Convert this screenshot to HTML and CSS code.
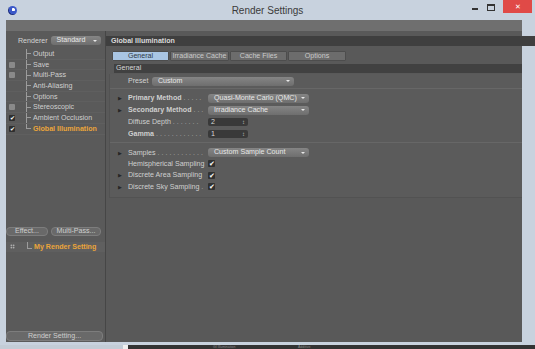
FILE: index.html
```html
<!DOCTYPE html>
<html lang="en">

<head>
    <meta charset="UTF-8">
    <title>Render Settings</title>
    <link rel="stylesheet" href="styles.css">
</head>

<body>
    <div class="window">
        <div class="titlebar">
            <div class="app-icon"></div>
            <div class="title">Render Settings</div>
            <div class="controls">
                <span class="ctl-min"></span>
                <span class="ctl-max"></span>
                <span class="ctl-close">&#x2715;</span>
            </div>
        </div>

        <div class="client">
            <div class="toolbar">
                <div class="grip"></div>
            </div>

            <div class="panes">
                <aside class="left">
                    <div class="renderer-row">
                        <span>Renderer</span>
                        <div class="dropdown small">Standard</div>
                    </div>

                    <div class="tree">
                        <div class="tree-row"><span class="check none"></span><span class="branch"></span>Output</div>
                        <div class="tree-row"><span class="check off"></span><span class="branch"></span>Save</div>
                        <div class="tree-row"><span class="check off"></span><span class="branch"></span>Multi-Pass</div>
                        <div class="tree-row"><span class="check none"></span><span class="branch"></span>Anti-Aliasing</div>
                        <div class="tree-row"><span class="check none"></span><span class="branch"></span>Options</div>
                        <div class="tree-row"><span class="check off"></span><span class="branch"></span>Stereoscopic</div>
                        <div class="tree-row"><span class="check on">&#x2714;</span><span class="branch"></span>Ambient Occlusion</div>
                        <div class="tree-row active"><span class="check on">&#x2714;</span><span class="branch last"></span>Global Illumination</div>
                    </div>

                    <div class="left-buttons">
                        <button class="btn effect">Effect...</button>
                        <button class="btn multipass">Multi-Pass...</button>
                    </div>

                    <div class="setting-row">
                        <span class="dots-icon"></span>
                        <span class="elbow"></span>
                        My Render Setting
                    </div>

                    <button class="btn wide">Render Setting...</button>
                </aside>

                <section class="right">
                    <div class="panel-head">Global Illumination</div>

                    <div class="tabs">
                        <div class="tab active">General</div>
                        <div class="tab t2">Irradiance Cache</div>
                        <div class="tab t3">Cache Files</div>
                        <div class="tab t4">Options</div>
                    </div>

                    <div class="section-bar">General</div>

                    <div class="group">
                        <div class="preset-row">
                            <span class="preset-label">Preset</span>
                            <div class="dropdown preset">Custom</div>
                        </div>

                        <div class="block">
                            <div class="prow">
                                <span class="arrow">&#x25B6;</span>
                                <span class="label bold">Primary Method <i>. . . . .</i></span>
                                <div class="dropdown method">Quasi-Monte Carlo (QMC)</div>
                            </div>
                            <div class="prow">
                                <span class="arrow">&#x25B6;</span>
                                <span class="label bold">Secondary Method <i>. . .</i></span>
                                <div class="dropdown method">Irradiance Cache</div>
                            </div>
                            <div class="prow">
                                <span class="arrow"></span>
                                <span class="label">Diffuse Depth <i>. . . . . . .</i></span>
                                <div class="field">2</div>
                            </div>
                            <div class="prow">
                                <span class="arrow"></span>
                                <span class="label bold">Gamma <i>. . . . . . . . . . . .</i></span>
                                <div class="field">1</div>
                            </div>
                        </div>

                        <div class="block samples">
                            <div class="srow">
                                <span class="arrow">&#x25B6;</span>
                                <span class="label">Samples <i>. . . . . . . . . . . .</i></span>
                                <div class="dropdown method">Custom Sample Count</div>
                            </div>
                            <div class="srow">
                                <span class="arrow"></span>
                                <span class="label">Hemispherical Sampling</span>
                                <span class="tick">&#x2714;</span>
                            </div>
                            <div class="srow">
                                <span class="arrow">&#x25B6;</span>
                                <span class="label">Discrete Area Sampling</span>
                                <span class="tick">&#x2714;</span>
                            </div>
                            <div class="srow">
                                <span class="arrow">&#x25B6;</span>
                                <span class="label">Discrete Sky Sampling <i>.</i></span>
                                <span class="tick">&#x2714;</span>
                            </div>
                        </div>
                    </div>
                </section>
            </div>
        </div>
    </div>

    <div class="behind">
        <span class="behind-light"></span>
        <span class="behind-box"></span>
        <span class="behind-text one">GI Illumination</span>
        <span class="behind-text two">Additive</span>
    </div>
</body>

</html>
```

FILE: styles.css
```css
body {
    margin: 0;
    width: 535px;
    height: 349px;
    overflow: hidden;
    background: #343434;
    font-family: "Liberation Sans", Arial, sans-serif;
    font-size: 7.1px;
    color: #cdcdcd;
}

.window {
    width: 535px;
    height: 345px;
    background: #c8d2de;
    display: flex;
    flex-direction: column;
}

/* title bar */

.titlebar {
    height: 20px;
    flex-shrink: 0;
    display: flex;
    align-items: center;
}

.app-icon {
    width: 9px;
    height: 9px;
    margin-left: 8px;
    border-radius: 50%;
    background: radial-gradient(circle at 60% 40%, #ffffff 0 18%, #3b58c8 22% 60%, #1d2f80 64%);
}

.title {
    flex: 1;
    text-align: center;
    font-size: 10px;
    color: #3b3b3b;
    padding-left: 46px;
}

.controls {
    align-self: flex-start;
    display: flex;
    align-items: flex-start;
}

.ctl-min {
    width: 6px;
    height: 2px;
    background: #333;
    margin: 8px 9px 0 0;
}

.ctl-max {
    width: 6px;
    height: 4px;
    border: 1px solid #333;
    border-top-width: 2px;
    margin: 4px 8px 0 0;
}

.ctl-close {
    width: 29px;
    height: 13px;
    margin-right: 3px;
    background: #e04a47;
    color: #fff;
    font-size: 7px;
    text-align: center;
    line-height: 13px;
}

/* client area */

.client {
    flex: 1;
    margin: 0 13px 3px 6px;
    background: #565656;
    display: flex;
    flex-direction: column;
}

.toolbar {
    height: 11px;
    background: #6f6f6f;
    display: flex;
    align-items: center;
}

.grip {
    width: 7px;
    height: 6px;
    margin-left: 3px;
    background: radial-gradient(circle, #9a9a9a 40%, transparent 45%) 0 0 / 2px 2px;
}

.panes {
    flex: 1;
    display: flex;
}

/* left pane */

.left {
    width: 99px;
    border-right: 1px solid #464646;
    background: #5a5a5a;
    display: flex;
    flex-direction: column;
}

.renderer-row {
    height: 13px;
    margin-top: 3px;
    display: flex;
    align-items: center;
    padding-left: 12px;
    gap: 3px;
    color: #d4d4d4;
}

.dropdown {
    height: 9px;
    line-height: 9px;
    border-radius: 3px;
    background: linear-gradient(#858585, #6e6e6e);
    color: #e8e8e8;
    padding-left: 6px;
    position: relative;
    box-sizing: border-box;
    white-space: nowrap;
}

.dropdown::after {
    content: "";
    position: absolute;
    right: 4px;
    top: 3.5px;
    border-left: 2.5px solid transparent;
    border-right: 2.5px solid transparent;
    border-top: 2.5px solid #e8e8e8;
}

.dropdown.small {
    width: 50px;
}

.tree {
    margin-top: 2px;
}

.tree-row {
    height: 10.7px;
    display: flex;
    align-items: center;
    border-bottom: 1px solid #5f5f5f;
    box-sizing: border-box;
    color: #cfcfcf;
    white-space: nowrap;
}

.tree-row.active {
    color: #eba53a;
    font-weight: bold;
}

.check {
    width: 6px;
    height: 6px;
    margin-left: 3px;
    border-radius: 1px;
    flex-shrink: 0;
}

.check.none {
    visibility: hidden;
}

.check.off {
    background: #8a8a8a;
}

.check.on {
    background: #2e2e2e;
    color: #fff;
    font-size: 6px;
    line-height: 6px;
    text-align: center;
    font-weight: normal;
}

.branch {
    align-self: stretch;
    width: 4px;
    margin: 0 2px 0 11px;
    border-left: 1px solid #9c9c9c;
    background: linear-gradient(#9c9c9c, #9c9c9c) no-repeat 0 50% / 4px 1px;
}

.branch.last {
    border-left: none;
    width: 5px;
    background:
        linear-gradient(#9c9c9c, #9c9c9c) no-repeat 0 50% / 5px 1px,
        linear-gradient(#9c9c9c, #9c9c9c) no-repeat 0 0 / 1px 50%;
}

.left-buttons {
    margin-top: 92px;
    display: flex;
    gap: 3px;
}

.btn {
    height: 9px;
    padding: 0;
    border: 1px solid #7d7d7d;
    border-radius: 4px;
    background: #696969;
    color: #cfcfcf;
    font-family: inherit;
    font-size: 7.1px;
    line-height: 7px;
    white-space: nowrap;
}

.btn.effect {
    width: 42px;
}

.btn.multipass {
    width: 50px;
}

.setting-row {
    margin-top: 6px;
    height: 10.5px;
    background: #5f5f5f;
    display: flex;
    align-items: center;
    color: #eba53a;
    font-weight: bold;
    white-space: nowrap;
}

.dots-icon {
    width: 5px;
    height: 5px;
    margin-left: 4px;
    background: radial-gradient(circle, #e0e0e0 40%, transparent 50%) 0 0 / 2.5px 2.5px;
}

.elbow {
    width: 4px;
    height: 6px;
    margin: 0 2px 3px 12px;
    border-left: 1px solid #9c9c9c;
    border-bottom: 1px solid #9c9c9c;
}

.btn.wide {
    margin-top: auto;
    margin-bottom: 1px;
    width: 97px;
    height: 10px;
}

/* right pane */

.right {
    flex: 1;
    background: #595959;
    padding-top: 5px;
    display: flex;
    flex-direction: column;
}

.panel-head {
    height: 10px;
    line-height: 10px;
    background: #3f3f3f;
    padding-left: 5px;
    color: #dadada;
    font-weight: bold;
    margin-right: -13px;
}

.tabs {
    margin: 5px 0 0 6px;
    display: flex;
    gap: 1px;
}

.tab {
    height: 9.5px;
    line-height: 8px;
    width: 56px;
    text-align: center;
    background: #6c6c6c;
    border: 1px solid #4d4d4d;
    box-sizing: border-box;
    border-radius: 1px;
    color: #cacaca;
    white-space: nowrap;
    overflow: hidden;
}

.tab.active {
    width: 57px;
    background: #a9c5e3;
    color: #2f3a45;
}

.tab.t2 {
    width: 59px;
}

.tab.t3 {
    width: 57px;
}

.tab.t4 {
    width: 58px;
}

.section-bar {
    margin: 3px 0 0 8px;
    height: 9.5px;
    line-height: 9.5px;
    background: #414141;
    padding-left: 2px;
    color: #d6d6d6;
}

.group {
    margin: 1px 0 0 3px;
    border-left: 1px solid #525252;
    border-bottom: 1px solid #525252;
    background: #5b5b5b;
    padding-bottom: 3px;
}

.preset-row {
    height: 14px;
    display: flex;
    align-items: center;
    padding-left: 18px;
    border-bottom: 1px solid #676767;
}

.preset-label {
    width: 24px;
    color: #d2d2d2;
}

.dropdown.preset {
    width: 142px;
}

.block {
    padding: 3px 0 2px;
    border-bottom: 1px solid #676767;
}

.block.samples {
    border-bottom: none;
    padding-top: 4px;
}

.prow,
.srow {
    display: flex;
    align-items: center;
    height: 12px;
}

.srow {
    height: 11.3px;
}

.arrow {
    width: 10px;
    margin-left: 8px;
    font-size: 5px;
    color: #262626;
}

.label {
    width: 80px;
    white-space: nowrap;
    overflow: hidden;
    color: #cfcfcf;
}

.label.bold {
    font-weight: bold;
}

.label i {
    font-style: normal;
    font-weight: normal;
    color: #a5a5a5;
}

.dropdown.method {
    width: 101px;
}

.field {
    width: 40px;
    height: 8.5px;
    line-height: 8.5px;
    background: #393939;
    border-radius: 2px;
    padding-left: 3px;
    box-sizing: border-box;
    color: #d8d8d8;
    position: relative;
}

.field::after {
    content: "\2195";
    position: absolute;
    right: 3px;
    top: 0;
    font-size: 6px;
    color: #bdbdbd;
}

.tick {
    width: 7px;
    height: 7px;
    background: #313131;
    border-radius: 1px;
    color: #fff;
    font-size: 6.5px;
    line-height: 7px;
    text-align: center;
}

/* part of another window behind */

.behind {
    height: 4px;
    display: flex;
    overflow: hidden;
    background: #333;
    color: #8a8a8a;
    font-size: 3.5px;
    line-height: 4px;
}

.behind-light {
    width: 123px;
    background: #c3ccd6;
}

.behind-box {
    width: 5px;
    background: #f0f0f0;
    margin-right: 85px;
}

.behind-text.one {
    width: 85px;
}
```
